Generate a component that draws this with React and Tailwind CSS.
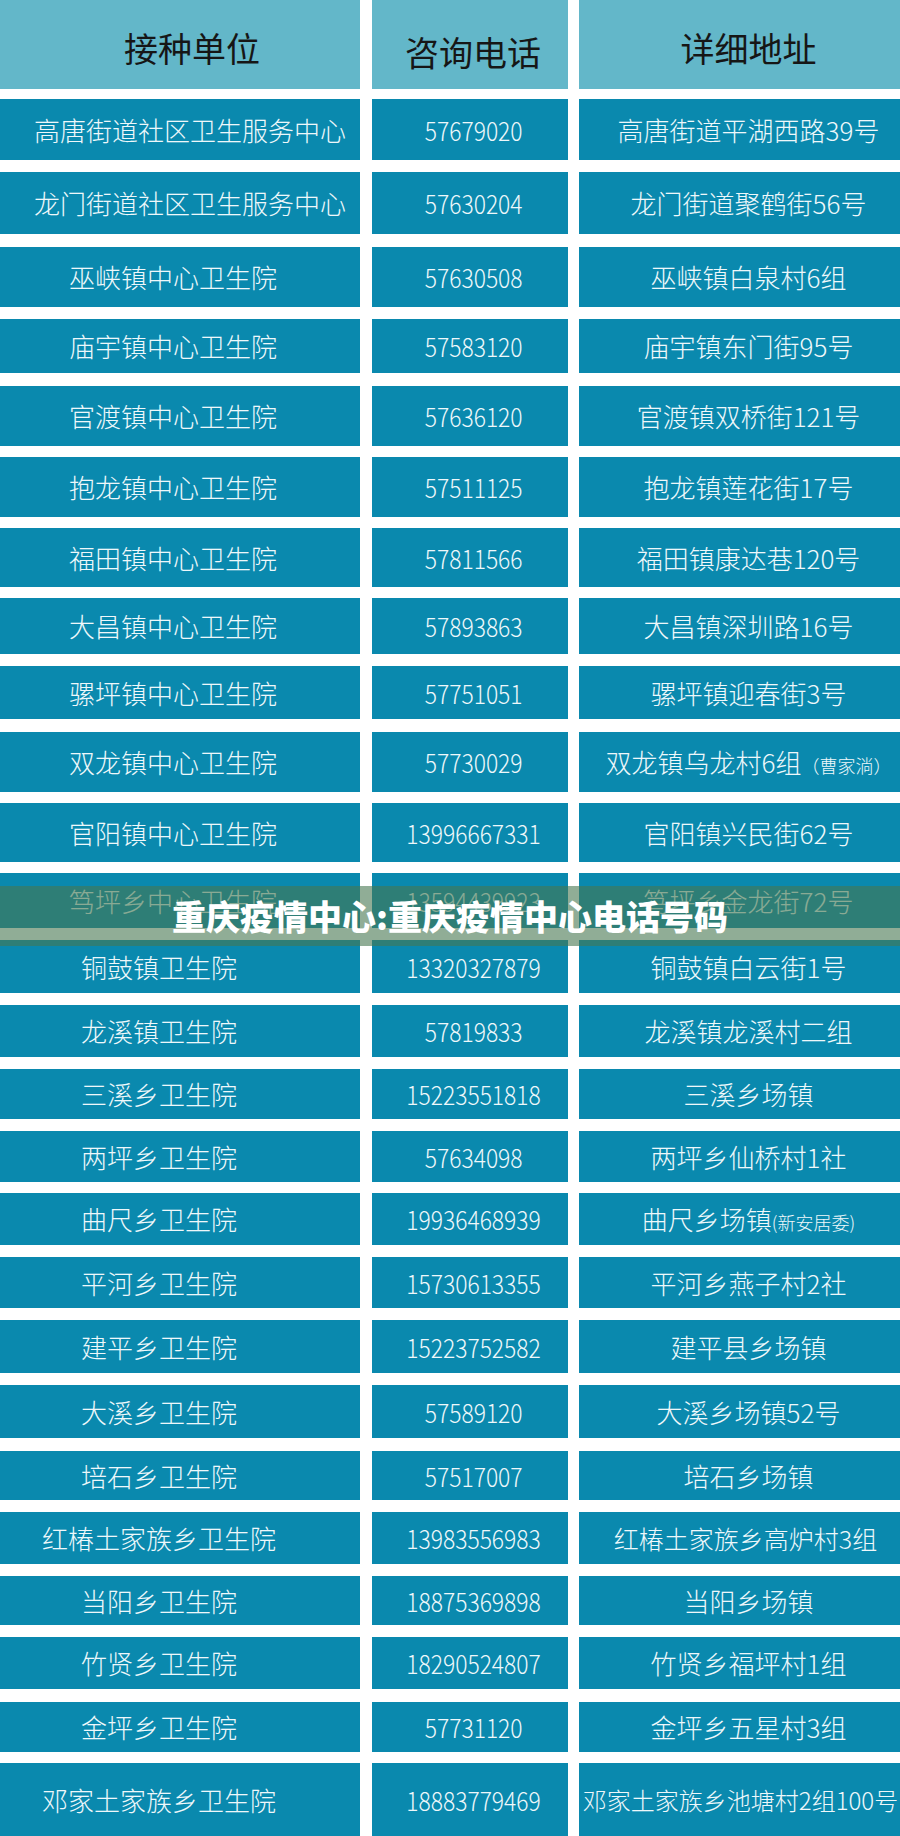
import React from "react";

const A1 = "pl-[20px]";
const A2 = "pr-[14px]";
const A3 = "pr-[42px]";
const D = "pl-[18px] text-[26px]";

const rows = [
  { c: "mt-[10px] h-[61px]", o: A1, a: "高唐街道社区卫生服务中心", p: "57679020", d: "高唐街道平湖西路39号" },
  { c: "mt-[12px] h-[62px]", o: A1, a: "龙门街道社区卫生服务中心", p: "57630204", d: "龙门街道聚鹤街56号" },
  { c: "mt-[13px] h-[60px]", o: A2, a: "巫峡镇中心卫生院", p: "57630508", d: "巫峡镇白泉村6组" },
  { c: "mt-[12px] h-[54px]", o: A2, a: "庙宇镇中心卫生院", p: "57583120", d: "庙宇镇东门街95号" },
  { c: "mt-[13px] h-[60px]", o: A2, a: "官渡镇中心卫生院", p: "57636120", d: "官渡镇双桥街121号" },
  { c: "mt-[11px] h-[60px]", o: A2, a: "抱龙镇中心卫生院", p: "57511125", d: "抱龙镇莲花街17号" },
  { c: "mt-[11px] h-[59px]", o: A2, a: "福田镇中心卫生院", p: "57811566", d: "福田镇康达巷120号" },
  { c: "mt-[11px] h-[56px]", o: A2, a: "大昌镇中心卫生院", p: "57893863", d: "大昌镇深圳路16号" },
  { c: "mt-[12px] h-[53px]", o: A2, a: "骡坪镇中心卫生院", p: "57751051", d: "骡坪镇迎春街3号" },
  { c: "mt-[13px] h-[60px]", o: A2, a: "双龙镇中心卫生院", p: "57730029", d: "双龙镇乌龙村6组", s: "（曹家淌）" },
  { c: "mt-[11px] h-[59px]", o: A2, a: "官阳镇中心卫生院", p: "13996667331", d: "官阳镇兴民街62号" },
  { c: "mt-[11px] h-[55px]", o: A2, a: "笃坪乡中心卫生院", p: "13594439923", d: "笃坪乡金龙街72号" },
  { c: "mt-[12px] h-[53px]", o: A3, a: "铜鼓镇卫生院", p: "13320327879", d: "铜鼓镇白云街1号" },
  { c: "mt-[12px] h-[52px]", o: A3, a: "龙溪镇卫生院", p: "57819833", d: "龙溪镇龙溪村二组" },
  { c: "mt-[12px] h-[50px]", o: A3, a: "三溪乡卫生院", p: "15223551818", d: "三溪乡场镇" },
  { c: "mt-[12px] h-[51px]", o: A3, a: "两坪乡卫生院", p: "57634098", d: "两坪乡仙桥村1社" },
  { c: "mt-[11px] h-[52px]", o: A3, a: "曲尺乡卫生院", p: "19936468939", d: "曲尺乡场镇", s: "(新安居委)" },
  { c: "mt-[12px] h-[51px]", o: A3, a: "平河乡卫生院", p: "15730613355", d: "平河乡燕子村2社" },
  { c: "mt-[12px] h-[53px]", o: A3, a: "建平乡卫生院", p: "15223752582", d: "建平县乡场镇" },
  { c: "mt-[12px] h-[53px]", o: A3, a: "大溪乡卫生院", p: "57589120", d: "大溪乡场镇52号" },
  { c: "mt-[13px] h-[49px]", o: A3, a: "培石乡卫生院", p: "57517007", d: "培石乡场镇" },
  { c: "mt-[12px] h-[52px]", o: A3, a: "红椿土家族乡卫生院", p: "13983556983", d: "红椿土家族乡高炉村3组", q: "pl-[12px] text-[25px]" },
  { c: "mt-[12px] h-[49px]", o: A3, a: "当阳乡卫生院", p: "18875369898", d: "当阳乡场镇" },
  { c: "mt-[12px] h-[52px]", o: A3, a: "竹贤乡卫生院", p: "18290524807", d: "竹贤乡福坪村1组" },
  { c: "mt-[13px] h-[50px]", o: A3, a: "金坪乡卫生院", p: "57731120", d: "金坪乡五星村3组" },
  { c: "mt-[11px] h-[73px]", o: A3, a: "邓家土家族乡卫生院", p: "18883779469", d: "邓家土家族乡池塘村2组100号", q: "pl-[2px] text-[24px]" },
];

const font = { fontFamily: '"Noto Sans CJK SC", "Noto Sans", sans-serif' };

export default function App() {
  return (
    <div className="relative w-[900px] h-[1836px] overflow-hidden bg-white" style={font}>
      <div className="flex h-[89px] text-[34px] text-[#161616] leading-none">
        <div className="w-[360px] shrink-0 bg-[#63b7c9] flex items-center justify-center pt-[6px]">
          <span className="inline-block ml-[24px]">接种单位</span>
        </div>
        <div className="ml-[12px] w-[196px] shrink-0 bg-[#63b7c9] flex items-center justify-center pt-[14px]">
          <span className="inline-block ml-[6px]">咨询电话</span>
        </div>
        <div className="ml-[11px] w-[321px] shrink-0 bg-[#63b7c9] flex items-center justify-center pt-[6px]">
          <span className="inline-block ml-[18px]">详细地址</span>
        </div>
      </div>
      {rows.map((r, i) => (
        <div key={i} className={`flex ${r.c} text-[#eef8fb] leading-none font-light`}>
          <div className={`w-[360px] shrink-0 bg-[#0a89ae] flex items-center justify-center text-[26px] ${r.o}`}>
            <span className="inline-block whitespace-nowrap">{r.a}</span>
          </div>
          <div className="ml-[12px] w-[196px] shrink-0 bg-[#0a89ae] flex items-center justify-center text-[26px] pl-[8px]">
            <span className="inline-block scale-x-[0.88] whitespace-nowrap">{r.p}</span>
          </div>
          <div className={`ml-[11px] w-[321px] shrink-0 bg-[#0a89ae] flex items-center justify-center ${r.q || D}`}>
            <span className="inline-block whitespace-nowrap">
              {r.d}
              {r.s && <span className="text-[18px]">{r.s}</span>}
            </span>
          </div>
        </div>
      ))}
      <div className="absolute left-0 right-0 top-[886px] h-[60px] bg-[#467650]/60 flex items-center justify-center">
        <span className="text-[34px] font-black text-white leading-none">重庆疫情中心:重庆疫情中心电话号码</span>
      </div>
    </div>
  );
}
